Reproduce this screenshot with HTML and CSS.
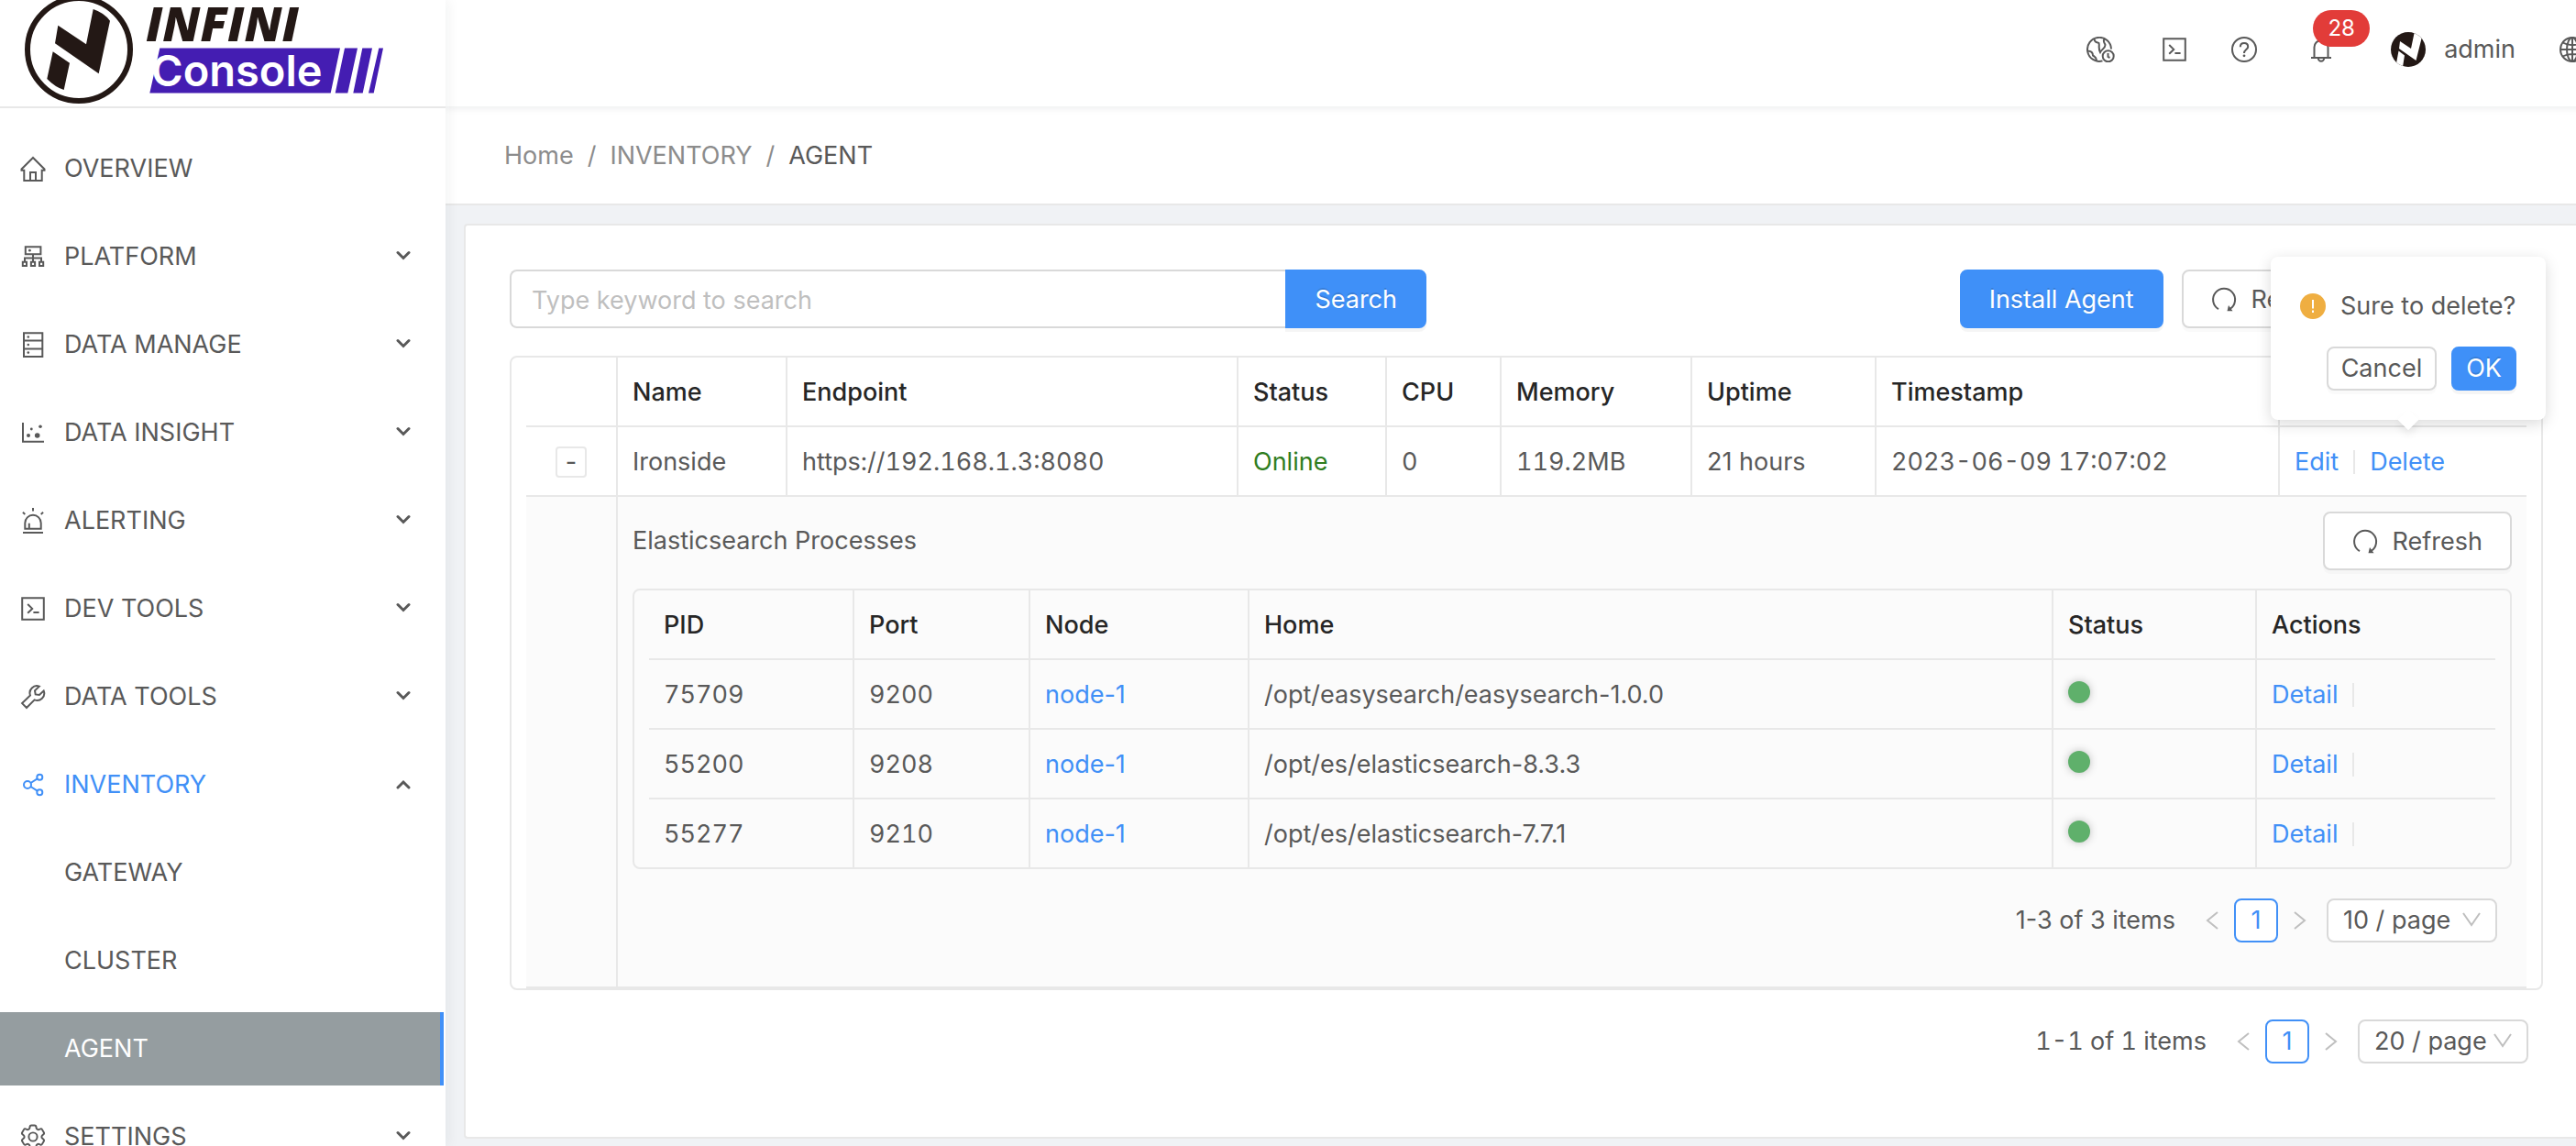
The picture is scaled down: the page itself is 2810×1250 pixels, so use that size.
FILE: index.html
```html
<!DOCTYPE html>
<html lang="en">
<head>
    <meta charset="UTF-8">
    <meta name="viewport" content="width=device-width, initial-scale=1.0">
    <title>INFINI Console</title>
    <link rel="stylesheet" href="styles.css">
</head>
<body>

<!-- Icon set -->
<svg class="sprite" aria-hidden="true">
    <symbol id="i-home" viewBox="0 0 28 28">
        <path d="M14 2 1.5 14.5v1.2h2.8V27h19.4V15.7h2.8v-1.2z"/><path d="M11 27v-9h6v9"/>
    </symbol>
    <symbol id="i-platform" viewBox="0 0 28 28">
        <path d="M5.8 3.2h16.6v8H5.8zM14 11.2v8.3M5 19.5v-4h18v4"/>
        <path d="M2.8 19.8h4.2v4.2H2.8zM11.9 19.8h4.2v4.2h-4.2zM21 19.8h4.2v4.2H21z"/>
        <circle class="dot" cx="10.4" cy="7.2" r="1.4"/>
    </symbol>
    <symbol id="i-data" viewBox="0 0 28 28">
        <path d="M4 1.3h20.3V27H4zM4 9.6h20.3M4 18.4h20.3"/>
        <circle class="dot" cx="8.8" cy="5.5" r="1.3"/><circle class="dot" cx="8.8" cy="14" r="1.3"/><circle class="dot" cx="8.8" cy="22.6" r="1.3"/>
    </symbol>
    <symbol id="i-chart" viewBox="0 0 28 28">
        <path d="M3 3v20.8h23"/>
        <circle class="dot" cx="9" cy="17" r="2"/><circle class="dot" cx="12.3" cy="10" r="1.4"/>
        <circle class="dot" cx="18.7" cy="17" r="2.8"/><circle class="dot" cx="22" cy="7.3" r="1.8"/>
    </symbol>
    <symbol id="i-alert" viewBox="0 0 28 28">
        <path d="M5.3 22.8v-6.3a8.7 8.7 0 0 1 17.4 0v6.3zM3 27h22M9.8 23v-6.3M14 0v3.4M2.9 4.8l2.4 2.1M25.1 4.8l-2.4 2.1"/>
    </symbol>
    <symbol id="i-code" viewBox="0 0 28 28">
        <path d="M2.2 2.2h23.6v23.6H2.2zM8.2 9l5 4.9-5 4.9M14.4 18h6.2"/>
    </symbol>
    <symbol id="i-tool" viewBox="0 0 28 28">
        <path d="M15.6 17.4 7 26l-4.9-4.9L11 12.5A7.7 7.7 0 0 1 20.8 2.6L16 7.3l.7 4.1 4.2.6 4.8-4.5A7.7 7.7 0 0 1 15.6 17.4z"/>
    </symbol>
    <symbol id="i-share" viewBox="0 0 28 28">
        <circle cx="8" cy="14" r="4"/><circle cx="21.3" cy="5.7" r="3"/><circle cx="21.3" cy="22.3" r="3"/>
        <path d="M11.5 12l7.2-4.6M11.5 16l7.2 4.6"/>
    </symbol>
    <symbol id="i-gear" viewBox="2 2 20 20">
        <path class="thin" d="M9.594 3.940c.09-.542.56-.94 1.110-.94h2.593c.55 0 1.020.398 1.110.94l.213 1.281c.063.374.313.686.645.87.074.04.147.083.22.127.324.196.72.257 1.075.124l1.217-.456a1.125 1.125 0 0 1 1.370.49l1.296 2.247a1.125 1.125 0 0 1-.26 1.431l-1.003.827c-.293.24-.438.613-.431.992a6.759 6.759 0 0 1 0 .255c-.007.378.138.75.43.99l1.005.828c.424.35.534.954.26 1.430l-1.298 2.247a1.125 1.125 0 0 1-1.369.491l-1.217-.456c-.355-.133-.75-.072-1.076.124a6.570 6.570 0 0 1-.22.128c-.331.183-.581.495-.644.869l-.213 1.280c-.09.543-.56.941-1.110.941h-2.594c-.55 0-1.020-.398-1.110-.94l-.213-1.281c-.062-.374-.312-.686-.644-.87a6.520 6.520 0 0 1-.22-.127c-.325-.196-.72-.257-1.076-.124l-1.217.456a1.125 1.125 0 0 1-1.369-.49l-1.297-2.247a1.125 1.125 0 0 1 .26-1.431l1.004-.827c.292-.24.437-.613.43-.992a6.932 6.932 0 0 1 0-.255c.007-.378-.138-.75-.43-.99l-1.004-.828a1.125 1.125 0 0 1-.26-1.430l1.297-2.247a1.125 1.125 0 0 1 1.370-.491l1.216.456c.356.133.751.072 1.076-.124.072-.044.146-.087.22-.128.332-.183.582-.495.644-.869l.214-1.281z"/>
        <circle class="thin" cx="12" cy="12" r="3.3"/>
    </symbol>
    <symbol id="i-down" viewBox="0 0 16 16"><path class="bold" d="M2 3.5 8 9.5l6-6"/></symbol>
    <symbol id="i-up" viewBox="0 0 16 16"><path class="bold" d="M2 11 8 5l6 6"/></symbol>
    <symbol id="i-timezone" viewBox="0 0 32 28">
        <path d="M17.5 26.4A13 13 0 1 1 27 13.5"/>
        <path d="M8.5 2.5c.5 3 1.5 3.5 5 4.5 1 3-1 5 1.5 10 1.5-3 5.5-4.5 5.5-8C20 7 17.5 5.5 19.5 2.5M1 15.5c3.5 0 6 1.5 6 5 1.5 1.5 3.5 1 4 5.5"/>
        <circle cx="23.7" cy="21.3" r="6"/><path d="M23.5 18v4l2 1"/>
    </symbol>
    <symbol id="i-help" viewBox="0 0 28 28">
        <circle cx="14" cy="14" r="13"/>
        <path d="M9.8 11.2c0-2.6 1.8-4.2 4.2-4.2s4.2 1.6 4.2 3.9c0 3-4.2 3.3-4.2 7"/>
        <circle class="dot" cx="14" cy="20.8" r="1.4"/>
    </symbol>
    <symbol id="i-bell" viewBox="0 0 28 28">
        <path d="M3 23h22M6.5 23V11.5a7.5 7.5 0 0 1 15 0V23M14 4V1.5M10.8 23.5a3.2 3.2 0 0 0 6.4 0"/>
    </symbol>
    <symbol id="i-globe" viewBox="0 0 28 28">
        <circle cx="14" cy="14" r="13"/><ellipse cx="14" cy="14" rx="6" ry="13"/>
        <path d="M1 14h26M14 1v26M3.5 6.5c6 3.5 15 3.5 21 0M3.5 21.5c6-3.5 15-3.5 21 0"/>
    </symbol>
    <symbol id="i-reload" viewBox="0 0 28 28">
        <path d="M8 24.2A12 12 0 1 1 20.5 24"/><path class="dot" d="M17.5 26.2l1.5-6.2 4.5 6.2z"/>
    </symbol>
    <symbol id="i-warn" viewBox="0 0 28 28">
        <circle class="dot" cx="14" cy="14" r="14"/><path class="mark" d="M14 7v9.500M14 18.500v2.500"/>
    </symbol>
    <symbol id="i-prev" viewBox="0 0 14 20"><path d="M13 1 2 10l11 9"/></symbol>
    <symbol id="i-next" viewBox="0 0 14 20"><path d="M1 1l11 9-11 9"/></symbol>
    <symbol id="i-select" viewBox="0 0 20 16"><path d="M1 1l9 13L19 1"/></symbol>
</svg>

<div class="layout">
    <aside class="sidebar">
        <a class="logo" href="#" aria-label="INFINI Console">
            <svg viewBox="0 0 486 116" role="img">
                <circle cx="86" cy="54" r="56" fill="none" stroke="#231815" stroke-width="6"/>
                <path fill="#231815" d="M101.7 10q12 4 18.3 12.7L107.7 80.3 60 47.3l3.3-19.6L94 48.3zM57.7 56.3 76 68.7 69.7 98Q60 95 51.3 86z"/>
                <path fill="#441db2" d="M174.3 52.5H371l-10.3 49H163.3zM376 52.5h14l-10.7 49h-13.6zM395.3 52.5h10.7l-10.3 49h-10.4zM413.3 52.5h4.7l-10.3 49H402z"/>
                <text class="logo-brand" x="159" y="45">INFINI</text>
                <text class="logo-name" x="165" y="94">Console</text>
            </svg>
        </a>
        <nav class="menu">
            <a class="menu-item" href="#"><svg class="icon"><use href="#i-home"/></svg><span>OVERVIEW</span></a>
            <a class="menu-item" href="#"><svg class="icon"><use href="#i-platform"/></svg><span>PLATFORM</span><svg class="arrow"><use href="#i-down"/></svg></a>
            <a class="menu-item" href="#"><svg class="icon"><use href="#i-data"/></svg><span>DATA MANAGE</span><svg class="arrow"><use href="#i-down"/></svg></a>
            <a class="menu-item" href="#"><svg class="icon"><use href="#i-chart"/></svg><span>DATA INSIGHT</span><svg class="arrow"><use href="#i-down"/></svg></a>
            <a class="menu-item" href="#"><svg class="icon"><use href="#i-alert"/></svg><span>ALERTING</span><svg class="arrow"><use href="#i-down"/></svg></a>
            <a class="menu-item" href="#"><svg class="icon"><use href="#i-code"/></svg><span>DEV TOOLS</span><svg class="arrow"><use href="#i-down"/></svg></a>
            <a class="menu-item" href="#"><svg class="icon"><use href="#i-tool"/></svg><span>DATA TOOLS</span><svg class="arrow"><use href="#i-down"/></svg></a>
            <a class="menu-item open" href="#"><svg class="icon"><use href="#i-share"/></svg><span>INVENTORY</span><svg class="arrow"><use href="#i-up"/></svg></a>
            <a class="menu-item sub" href="#">GATEWAY</a>
            <a class="menu-item sub" href="#">CLUSTER</a>
            <a class="menu-item sub selected" href="#">AGENT</a>
            <a class="menu-item" href="#"><svg class="icon"><use href="#i-gear"/></svg><span>SETTINGS</span><svg class="arrow"><use href="#i-down"/></svg></a>
        </nav>
    </aside>

    <div class="main">
        <header class="topbar">
            <button class="top-btn wide" aria-label="Time zone"><svg><use href="#i-timezone"/></svg></button>
            <button class="top-btn" aria-label="Console"><svg><use href="#i-code"/></svg></button>
            <button class="top-btn" aria-label="Help"><svg><use href="#i-help"/></svg></button>
            <button class="top-btn bell" aria-label="Notifications"><svg><use href="#i-bell"/></svg><span class="badge">28</span></button>
            <a class="user" href="#">
                <svg class="avatar" viewBox="0 0 38 38">
                    <clipPath id="face"><circle cx="19" cy="19" r="19"/></clipPath>
                    <circle cx="19" cy="19" r="19" fill="#231815"/>
                    <path clip-path="url(#face)" fill="#fff" d="M26-1l8 6-6.500 26L9 18l1-8 12 8zM8.500 20.500l6.500 5L13 38 6 34z"/>
                </svg>
                <span>admin</span>
            </a>
            <button class="top-btn" aria-label="Language"><svg><use href="#i-globe"/></svg></button>
        </header>

        <nav class="breadcrumb" aria-label="Breadcrumb">
            <a href="#">Home</a><i>/</i><a href="#">INVENTORY</a><i>/</i><span>AGENT</span>
        </nav>

        <main class="card">
            <div class="toolbar">
                <form class="search">
                    <input type="text" placeholder="Type keyword to search" aria-label="Keyword">
                    <button class="btn primary" type="button">Search</button>
                </form>
                <div class="actions">
                    <button class="btn primary">Install Agent</button>
                    <button class="btn"><svg><use href="#i-reload"/></svg>Refresh</button>
                </div>
            </div>

            <div class="table-box">
                <table>
                    <colgroup>
                        <col class="w-expand"><col class="w-name"><col class="w-endpoint"><col class="w-state"><col class="w-cpu">
                        <col class="w-memory"><col class="w-uptime"><col><col class="w-actions">
                    </colgroup>
                    <thead>
                        <tr>
                            <th></th><th>Name</th><th>Endpoint</th><th>Status</th><th>CPU</th>
                            <th>Memory</th><th>Uptime</th><th>Timestamp</th><th aria-label="Actions"></th>
                        </tr>
                    </thead>
                    <tbody>
                        <tr>
                            <td><button class="collapse" aria-label="Collapse row">-</button></td>
                            <td>Ironside</td>
                            <td class="num">https://192.168.1.3:8080</td>
                            <td class="online">Online</td>
                            <td class="num">0</td>
                            <td class="num">119.2MB</td>
                            <td>21 hours</td>
                            <td class="num">2023-06-09 17:07:02</td>
                            <td>
                                <div class="links">
                                    <a href="#">Edit</a>
                                    <div class="confirm">
                                        <a href="#">Delete</a>
                                        <div class="popover" role="dialog">
                                            <p><svg><use href="#i-warn"/></svg>Sure to delete?</p>
                                            <div class="popover-btns">
                                                <button class="btn small">Cancel</button>
                                                <button class="btn small primary">OK</button>
                                            </div>
                                        </div>
                                    </div>
                                </div>
                            </td>
                        </tr>
                        <tr class="expanded">
                            <td></td>
                            <td colspan="8">
                                <div class="sub-head">
                                    <span>Elasticsearch Processes</span>
                                    <button class="btn"><svg><use href="#i-reload"/></svg>Refresh</button>
                                </div>
                                <div class="table-box">
                                    <table>
                                        <colgroup>
                                            <col class="w-pid"><col class="w-port"><col class="w-node"><col><col class="w-status"><col class="w-detail">
                                        </colgroup>
                                        <thead>
                                            <tr><th>PID</th><th>Port</th><th>Node</th><th>Home</th><th>Status</th><th>Actions</th></tr>
                                        </thead>
                                        <tbody>
                                            <tr>
                                                <td class="num">75709</td><td class="num">9200</td><td><a href="#">node-1</a></td><td>/opt/easysearch/easysearch-1.0.0</td>
                                                <td><span class="health"></span></td><td><div class="links"><a href="#">Detail</a><span></span></div></td>
                                            </tr>
                                            <tr>
                                                <td class="num">55200</td><td class="num">9208</td><td><a href="#">node-1</a></td><td>/opt/es/elasticsearch-8.3.3</td>
                                                <td><span class="health"></span></td><td><div class="links"><a href="#">Detail</a><span></span></div></td>
                                            </tr>
                                            <tr>
                                                <td class="num">55277</td><td class="num">9210</td><td><a href="#">node-1</a></td><td>/opt/es/elasticsearch-7.7.1</td>
                                                <td><span class="health"></span></td><td><div class="links"><a href="#">Detail</a><span></span></div></td>
                                            </tr>
                                        </tbody>
                                    </table>
                                </div>
                                <div class="pagination">
                                    <span>1-3 of 3 items</span>
                                    <button class="page-arrow" aria-label="Previous page"><svg><use href="#i-prev"/></svg></button>
                                    <button class="page">1</button>
                                    <button class="page-arrow" aria-label="Next page"><svg><use href="#i-next"/></svg></button>
                                    <div class="page-size">
                                        <select aria-label="Processes per page"><option>10 / page</option><option>20 / page</option></select>
                                        <svg><use href="#i-select"/></svg>
                                    </div>
                                </div>
                            </td>
                        </tr>
                    </tbody>
                </table>
            </div>
            <div class="pagination">
                <span class="num">1-1 of 1 items</span>
                <button class="page-arrow" aria-label="Previous page"><svg><use href="#i-prev"/></svg></button>
                <button class="page">1</button>
                <button class="page-arrow" aria-label="Next page"><svg><use href="#i-next"/></svg></button>
                <div class="page-size">
                    <select aria-label="Agents per page"><option>20 / page</option><option>50 / page</option></select>
                    <svg><use href="#i-select"/></svg>
                </div>
            </div>
        </main>
    </div>
</div>

</body>
</html>
```
FILE: styles.css
```css
* {
    margin: 0;
    padding: 0;
    box-sizing: border-box;
}

body {
    font-family: Inter, "Liberation Sans", sans-serif;
    font-size: 27px;
    line-height: 44px;
    color: #595959;
    background-color: #f0f2f5;
}

a {
    color: #4190f7;
    text-decoration: none;
}

button,
input,
select {
    font: inherit;
    color: inherit;
}

button {
    cursor: pointer;
}

svg {
    display: block;
    flex-shrink: 0;
    fill: none;
    stroke: currentColor;
    stroke-width: 2;
}

svg text,
.logo path,
.avatar * {
    stroke: none;
}

.sprite {
    position: absolute;
    width: 0;
    height: 0;
}

.dot {
    fill: currentColor;
    stroke: none;
}

.mark {
    stroke: white;
}

.thin {
    stroke-width: 1.4;
}

.bold {
    stroke-width: 3;
    stroke-linecap: round;
}

.num {
    font-variant-numeric: tabular-nums;
}

.layout {
    display: flex;
    height: 100vh;
    overflow: hidden;
}

/* Sidebar */
.sidebar {
    position: relative;
    z-index: 2;
    width: 486px;
    flex-shrink: 0;
    background-color: white;
    box-shadow: 4px 0 12px rgba(29, 35, 41, 0.05);
}

.logo {
    display: block;
    height: 118px;
    border-bottom: 2px solid #e8e8e8;
}

.logo svg {
    width: 100%;
    height: 116px;
}

.logo-brand {
    font-family: "Open Sans", sans-serif;
    font-size: 52px;
    font-weight: 800;
    font-style: italic;
    fill: #231815;
}

.logo-name {
    font-family: Inter, sans-serif;
    font-size: 47px;
    font-weight: 600;
    fill: white;
}

.menu {
    display: flex;
    flex-direction: column;
    gap: 16px;
    padding-top: 26px;
}

.menu-item {
    display: flex;
    align-items: center;
    gap: 20px;
    height: 80px;
    margin-right: 2px;
    padding: 0 36px 0 22px;
    color: #595959;
}

.menu-item.open {
    color: #4190f7;
}

.menu-item.sub {
    padding-left: 70px;
}

.menu-item.selected {
    color: white;
    background-color: #959da0;
    border-right: 4px solid #4190f7;
}

.icon {
    width: 28px;
    height: 28px;
}

.arrow {
    width: 16px;
    height: 16px;
    margin-left: auto;
    color: #595959;
}

/* Header */
.main {
    flex: 1;
    min-width: 0;
}

.topbar {
    position: relative;
    z-index: 1;
    display: flex;
    align-items: center;
    justify-content: flex-end;
    gap: 48px;
    height: 116px;
    margin-right: -10px;
    padding-bottom: 8px;
    background-color: white;
    box-shadow: 0 2px 8px rgba(0, 21, 41, 0.08);
}

.top-btn {
    position: relative;
    width: 28px;
    height: 28px;
    border: none;
    background: none;
}

.top-btn svg {
    width: 100%;
    height: 28px;
}

.top-btn.wide {
    width: 32px;
    margin-right: 2px;
}

.bell {
    margin: 0 14px 0 8px;
}

.badge {
    position: absolute;
    left: 5px;
    bottom: 17px;
    width: 62px;
    height: 40px;
    border-radius: 20px;
    font-size: 24px;
    line-height: 40px;
    color: white;
    background-color: #e23c39;
}

.user {
    display: flex;
    align-items: center;
    gap: 20px;
    color: #595959;
}

.avatar {
    width: 38px;
    height: 38px;
}

.breadcrumb {
    height: 108px;
    padding: 32px 64px;
    background-color: white;
    border-bottom: 2px solid #e8e8e8;
}

.breadcrumb a,
.breadcrumb i {
    font-style: normal;
    color: #8c8c8c;
}

.breadcrumb i {
    margin: 0 15px;
}

/* Content card, bleeds off the right edge */
.card {
    margin: 20px 0 0 20px;
    padding: 48px 36px 80px 48px;
    background-color: white;
    border: 2px solid #e8e8e8;
    border-right: none;
    border-radius: 4px 0 0 4px;
}

.toolbar {
    display: flex;
    justify-content: space-between;
    margin-bottom: 30px;
}

.search {
    display: flex;
    flex: 0 1 1000px;
}

.search input {
    flex: 1;
    min-width: 0;
    height: 64px;
    padding: 2px 22px 0;
    border: 2px solid #d9d9d9;
    border-right: none;
    border-radius: 8px 0 0 8px;
    outline: none;
}

.search input::placeholder {
    color: #bfbfbf;
}

.search .btn {
    border-radius: 0 8px 8px 0;
}

.actions {
    display: flex;
    gap: 20px;
    margin-right: 188px;
}

.btn {
    display: flex;
    align-items: center;
    justify-content: center;
    gap: 16px;
    height: 64px;
    padding: 2px 30px 0;
    border: 2px solid #d9d9d9;
    border-radius: 8px;
    background-color: white;
    box-shadow: 0 4px 0 rgba(0, 0, 0, 0.02);
}

.btn svg {
    width: 28px;
    height: 28px;
}

.btn.primary {
    color: white;
    background-color: #3f90f8;
    border-color: #3f90f8;
    text-shadow: 0 -2px 0 rgba(0, 0, 0, 0.12);
    box-shadow: 0 4px 0 rgba(0, 0, 0, 0.04);
}

.btn.small {
    height: 48px;
    padding: 0 14px;
}

/* Tables */
.table-box {
    padding: 0 16px;
    border: 2px solid #e8e8e8;
    border-radius: 8px;
}

table {
    width: 100%;
    table-layout: fixed;
    border-collapse: separate;
    border-spacing: 0;
}

th,
td {
    height: 76px;
    padding: 16px 16px 14px;
    text-align: left;
    border-right: 2px solid #e8e8e8;
    border-bottom: 2px solid #e8e8e8;
}

th {
    font-weight: 500;
    color: #262626;
}

th:last-child,
td:last-child {
    border-right: none;
}

.table-box .table-box tr:last-child td {
    height: 74px;
    border-bottom: none;
}

.w-expand { width: 100px; }
.w-name { width: 185px; }
.w-endpoint { width: 492px; }
.w-state { width: 162px; }
.w-cpu { width: 125px; }
.w-memory { width: 208px; }
.w-uptime { width: 201px; }
.w-actions { width: 269px; }
.w-pid { width: 224px; }
.w-port { width: 192px; }
.w-node { width: 239px; }
.w-status { width: 222px; }
.w-detail { width: 260px; }

.online {
    color: #2f7d1e;
}

.collapse {
    display: block;
    width: 34px;
    height: 34px;
    margin: 0 auto;
    line-height: 28px;
    border: 2px solid #e8e8e8;
    border-radius: 4px;
    background-color: white;
}

.links {
    display: flex;
    align-items: center;
}

/* Divider between row actions */
.links > * + * {
    display: flex;
    align-items: center;
}

.links > * + *::before {
    content: "";
    width: 2px;
    height: 26px;
    margin: 0 16px;
    background-color: #e8e8e8;
}

.health {
    display: block;
    width: 24px;
    height: 24px;
    margin-bottom: 6px;
    border-radius: 50%;
    background-color: #5fb06b;
    box-shadow: 0 0 10px rgba(0, 0, 0, 0.25);
}

.expanded > td {
    padding-bottom: 16px;
    background-color: #fbfbfb;
}

.sub-head {
    display: flex;
    align-items: center;
    justify-content: space-between;
    margin-bottom: 20px;
}

/* Delete confirmation */
.confirm {
    position: relative;
}

.popover {
    position: absolute;
    right: -110px;
    bottom: 68px;
    z-index: 3;
    width: 300px;
    height: 178px;
    padding: 32px;
    border-radius: 8px;
    background-color: white;
    box-shadow: 0 4px 16px rgba(0, 0, 0, 0.15);
}

.popover::after {
    content: "";
    position: absolute;
    left: 142px;
    bottom: -8px;
    width: 16px;
    height: 16px;
    background-color: white;
    box-shadow: 4px 4px 8px rgba(0, 0, 0, 0.07);
    transform: rotate(45deg);
}

.popover p {
    display: flex;
    align-items: center;
    gap: 16px;
    height: 44px;
    margin-bottom: 22px;
    white-space: nowrap;
}

.popover p svg {
    width: 28px;
    height: 28px;
    color: #efae41;
}

.popover-btns {
    display: flex;
    justify-content: flex-end;
    gap: 16px;
}

/* Pagination */
.pagination {
    display: flex;
    align-items: center;
    justify-content: flex-end;
    margin: 32px 16px 0;
}

.expanded .pagination {
    margin-bottom: 32px;
}

.page-arrow {
    display: flex;
    justify-content: center;
    width: 48px;
    border: none;
    background: none;
    color: #bfbfbf;
}

.pagination span {
    margin-right: 16px;
}

.page-arrow svg {
    width: 14px;
    height: 20px;
}

.page {
    width: 48px;
    height: 48px;
    color: #4190f7;
    border: 2px solid #4190f7;
    border-radius: 8px;
    background-color: white;
}

.page-size {
    position: relative;
    margin-left: 5px;
}

.page-size select {
    display: block;
    width: 186px;
    height: 48px;
    padding: 0 16px;
    border: 2px solid #d9d9d9;
    border-radius: 8px;
    background-color: white;
    appearance: none;
}

.page-size svg {
    position: absolute;
    top: 15px;
    right: 18px;
    width: 20px;
    height: 16px;
    color: #bfbfbf;
    pointer-events: none;
}
```
